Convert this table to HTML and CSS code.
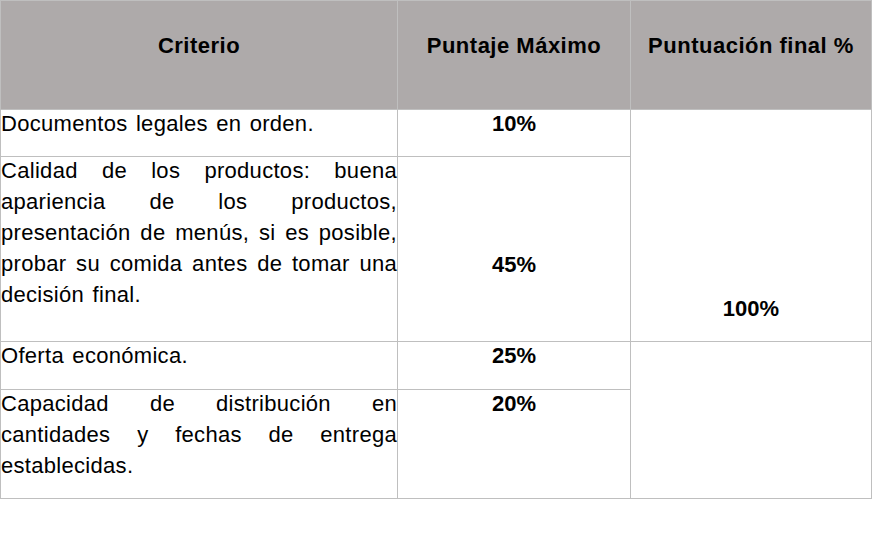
FILE: index.html
```html
<!DOCTYPE html>
<html lang="es">
<head>
<meta charset="utf-8">
<title>Criterios</title>
<link rel="stylesheet" href="styles.css">
</head>
<body>
<div class="grid">
  <div class="cell head">Criterio</div>
  <div class="cell head">Puntaje Máximo</div>
  <div class="cell head">Puntuación final %</div>

  <div class="cell text"><p>Documentos legales en orden.</p></div>
  <div class="cell num"><p>10%</p></div>
  <div class="cell num final"><p>100%</p></div>

  <div class="cell text"><p>Calidad de los productos: buena apariencia de los productos, presentación de menús, si es posible, probar su comida antes de tomar una decisión final.</p></div>
  <div class="cell num mid"><p>45%</p></div>

  <div class="cell text"><p>Oferta económica.</p></div>
  <div class="cell num"><p>25%</p></div>
  <div class="cell empty"></div>

  <div class="cell text"><p>Capacidad de distribución en cantidades y fechas de entrega establecidas.</p></div>
  <div class="cell num"><p>20%</p></div>
</div>
</body>
</html>
```

FILE: styles.css
```css
html, body {
  margin: 0;
  padding: 0;
  background: #ffffff;
}

body {
  font-family: "Liberation Sans", Arial, sans-serif;
  color: #000000;
}

.grid {
  display: grid;
  width: 872px;
  box-sizing: border-box;
  padding: 1px;
  gap: 1px;
  background: #bfbfbf;
  grid-template-columns: 396px 232px 240px;
  grid-template-rows: 108px 46px 184px 47px 108px;
}

.cell {
  background: #ffffff;
  font-size: 22px;
  line-height: 31px;
  box-sizing: border-box;
}

.cell p {
  margin: -2px 0 0;
}

.head {
  background: #aeaaaa;
  font-weight: bold;
  text-align: center;
  letter-spacing: 0.5px;
  padding-top: 29px;
}

.text {
  text-align: justify;
  letter-spacing: 0.3px;
  word-spacing: 2px;
}

.num {
  font-weight: bold;
  text-align: center;
}

.mid {
  padding-top: 94px;
}

.final {
  grid-column: 3;
  grid-row: 2 / 4;
  padding-top: 185px;
}

.empty {
  grid-column: 3;
  grid-row: 4 / 6;
}
```
